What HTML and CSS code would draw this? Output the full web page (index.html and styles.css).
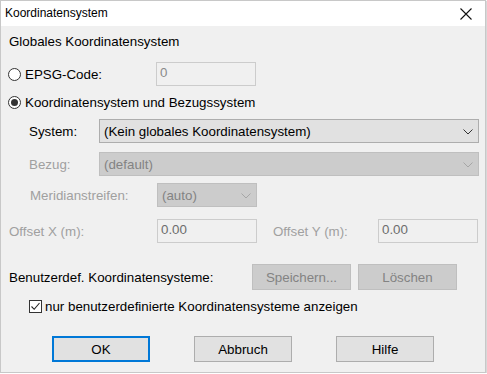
FILE: index.html
```html
<!DOCTYPE html>
<html lang="de">
<head>
    <meta charset="UTF-8">
    <title>Koordinatensystem</title>
    <link rel="stylesheet" href="styles.css">
</head>
<body>
    <div class="window">
        <div class="titlebar">
            <span class="title">Koordinatensystem</span>
            <span class="close">
                <svg width="12" height="12" viewBox="0 0 12 12"><path d="M0.5 0.5 L11.5 11.5 M11.5 0.5 L0.5 11.5" stroke="#111" stroke-width="1.1" fill="none"/></svg>
            </span>
        </div>

        <div class="content">
            <div class="heading">Globales Koordinatensystem</div>

            <div class="row row-epsg">
                <span class="radio"></span>
                <span class="radio-label label-epsg">EPSG-Code:</span>
                <div class="field field-disabled w100">0</div>
            </div>

            <div class="row row-radio2">
                <span class="radio checked"></span>
                <span class="radio-label">Koordinatensystem und Bezugssystem</span>
            </div>

            <div class="row row-system">
                <span class="label label-indent label-system">System:</span>
                <div class="combo combo-wide">
                    <span>(Kein globales Koordinatensystem)</span>
                    <svg class="chev" width="10" height="6" viewBox="0 0 10 6"><path d="M0.5 0.5 L5 5 L9.5 0.5" stroke="#333" fill="none"/></svg>
                </div>
            </div>

            <div class="row row-bezug">
                <span class="label label-indent label-system disabled">Bezug:</span>
                <div class="combo combo-wide combo-disabled">
                    <span>(default)</span>
                    <svg class="chev" width="10" height="6" viewBox="0 0 10 6"><path d="M0.5 0.5 L5 5 L9.5 0.5" stroke="#a6a6a6" fill="none"/></svg>
                </div>
            </div>

            <div class="row row-meridian">
                <span class="label label-indent label-meridian disabled">Meridianstreifen:</span>
                <div class="combo combo-disabled w100">
                    <span>(auto)</span>
                    <svg class="chev" width="10" height="6" viewBox="0 0 10 6"><path d="M0.5 0.5 L5 5 L9.5 0.5" stroke="#a6a6a6" fill="none"/></svg>
                </div>
            </div>

            <div class="row row-offset">
                <span class="label label-offset disabled">Offset X (m):</span>
                <div class="field field-disabled field-value w100">0.00</div>
                <span class="label label-offset-y disabled">Offset Y (m):</span>
                <div class="field field-disabled field-value w100">0.00</div>
            </div>

            <div class="row row-custom">
                <span class="label label-custom">Benutzerdef. Koordinatensysteme:</span>
                <button class="btn btn-disabled">Speichern...</button>
                <button class="btn btn-disabled btn-gap">Löschen</button>
            </div>

            <div class="row row-check">
                <span class="checkbox">
                    <svg width="11" height="11" viewBox="0 0 11 11"><path d="M1.5 5.5 L4.2 8.3 L9.5 2" stroke="#222" stroke-width="1.1" fill="none"/></svg>
                </span>
                <span class="check-label">nur benutzerdefinierte Koordinatensysteme anzeigen</span>
            </div>

            <div class="row row-buttons">
                <button class="btn btn-main btn-default">OK</button>
                <button class="btn btn-main">Abbruch</button>
                <button class="btn btn-main">Hilfe</button>
            </div>
        </div>
    </div>
</body>
</html>
```

FILE: styles.css
```css
body {
    margin: 0;
    background: #ffffff;
    font-family: 'Liberation Sans', Arial, sans-serif;
    font-size: 13.33px;
    color: #000;
}

/* fenster */
.window {
    width: 484px;
    height: 371px;
    border: 1px solid #c8c8c8;
    background: #f0f0f0;
    box-shadow: 1px 1px 1px #d8d8d8;
    display: flex;
    flex-direction: column;
}

.titlebar {
    height: 25px;
    background: #fff;
    display: flex;
    align-items: center;
    justify-content: space-between;
    padding: 0 13px 0 4px;
}

.title {
    font-size: 12px;
    line-height: 14px;
    margin-top: -2px;
}

.close {
    display: flex;
    margin-top: 1px;
}

.content {
    padding: 8px 0 0 8px;
    display: flex;
    flex-direction: column;
}

.heading {
    height: 16px;
    line-height: 16px;
}

.row {
    display: flex;
    align-items: center;
}

.row-epsg {
    height: 24px;
    margin-top: 12px;
    margin-left: -1px;
}

.row-radio2 {
    height: 16px;
    margin-top: 8px;
    margin-left: -1px;
}

.row-system {
    height: 24px;
    margin-top: 9px;
}

.row-bezug {
    height: 24px;
    margin-top: 9px;
}

.row-meridian {
    height: 24px;
    margin-top: 7px;
}

.row-offset {
    height: 24px;
    margin-top: 12px;
}

.row-custom {
    height: 26px;
    margin-top: 21px;
}

.row-check {
    height: 16px;
    margin-top: 8px;
}

.row-buttons {
    height: 26px;
    margin-top: 22px;
    padding-left: 43px;
}

/* radio & checkbox */
.radio {
    width: 11px;
    height: 11px;
    border: 1px solid #333;
    border-radius: 50%;
    background: #fff;
    position: relative;
    flex: none;
}

.radio.checked::after {
    content: '';
    position: absolute;
    left: 2px;
    top: 2px;
    width: 7px;
    height: 7px;
    border-radius: 50%;
    background: #333;
}

.radio-label {
    margin-left: 4px;
}

.label-epsg {
    width: 131px;
}

.checkbox {
    width: 11px;
    height: 11px;
    border: 1px solid #333;
    background: #fff;
    margin-left: 20px;
    display: flex;
    flex: none;
}

.check-label {
    margin-left: 3px;
}

/* labels */
.label {
    flex: none;
}

.label.disabled {
    color: #a0a0a0;
}

.label-indent {
    margin-left: 20px;
}

.label-system {
    width: 70px;
}

.label-meridian {
    margin-left: 21px;
    width: 127px;
}

.label-offset {
    width: 148px;
}

.label-offset-y {
    margin-left: 16px;
    width: 105px;
}

.label-custom {
    width: 243px;
}

/* eingabefelder */
.field {
    box-sizing: border-box;
    height: 24px;
    line-height: 20px;
    padding: 0 3px;
    flex: none;
}

.field-disabled {
    border: 1px solid #cccccc;
    background: #f0f0f0;
    color: #8a8a8a;
}

.field-value {
    color: #6d6d6d;
}

.w100 {
    width: 100px;
}

.combo {
    height: 24px;
    box-sizing: border-box;
    border: 1px solid #adadad;
    background: #e1e1e1;
    display: flex;
    align-items: center;
    justify-content: space-between;
    padding: 0 5px 0 4px;
    flex: none;
}

.combo-wide {
    width: 380px;
}

.combo-disabled {
    border-color: #bfbfbf;
    background: #cccccc;
    color: #838383;
}

.chev {
    margin-top: 1px;
}

/* schaltflaechen */
.btn {
    font-family: inherit;
    font-size: 13.33px;
    height: 26px;
    width: 99px;
    box-sizing: border-box;
    border: 1px solid #adadad;
    background: #e1e1e1;
    color: #000;
    padding: 0;
    flex: none;
}

.btn-disabled {
    border-color: #bfbfbf;
    background: #cccccc;
    color: #838383;
}

.btn-gap {
    margin-left: 7px;
}

.btn-main {
    width: 98px;
    margin-right: 44px;
}

.btn-default {
    border: 2px solid #0078d7;
}
```
